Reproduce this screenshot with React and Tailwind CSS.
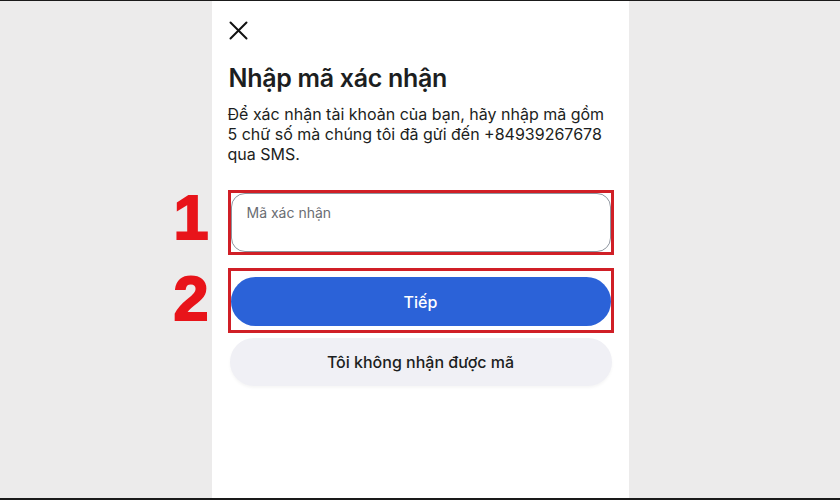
import React from "react";

export default function App() {
  return (
    <div className="w-[840px] h-[500px] bg-[#ecebeb] border-t border-b-2 border-[#1a1a1a] flex justify-center font-['Inter','Roboto',sans-serif] text-[#1c1e21]">
      <div className="w-[417px] h-full bg-white pl-[16px] pr-[15px] pt-[20px] flex flex-col">
        <div className="ml-[1px] w-[19px] h-[19px]">
          <svg width="19" height="19" viewBox="0 0 19 19" fill="none" stroke="#111" strokeWidth="2" strokeLinecap="round">
            <path d="M1.5 1.5 L17.5 17.5 M17.5 1.5 L1.5 17.5" />
          </svg>
        </div>
        <h1 className="mt-[23px] ml-[1px] text-[25px] leading-[30px] font-semibold tracking-[-0.3px]">Nhập mã xác nhận</h1>
        <p className="mt-[11px] text-[16px] leading-[20px]">
          Để xác nhận tài khoản của bạn, hãy nhập mã gồm 5 chữ số mà chúng tôi đã gửi đến +84939267678 qua SMS.
        </p>
        <div className="relative mt-[26px] border-[3px] border-[#d01f26]">
          <span className="absolute right-[100%] mr-[22px] top-[-1px] text-[63px] leading-[50px] font-bold text-[#e8141a] font-['Liberation_Sans',sans-serif] [-webkit-text-stroke:2px_#e8141a]">1</span>
          <div className="h-[59px] rounded-[14px] border border-[#8d949e] bg-white px-[15px] pt-[10px] text-[14px] leading-[18px] text-[#6a6d72]">
            Mã xác nhận
          </div>
        </div>
        <div className="relative mt-[13px] border-[3px] border-[#d01f26] pt-[6px] pb-[4px]">
          <span className="absolute right-[100%] mr-[22px] top-[2px] text-[63px] leading-[50px] font-bold text-[#e8141a] font-['Liberation_Sans',sans-serif] [-webkit-text-stroke:2px_#e8141a]">2</span>
          <div className="h-[49px] rounded-full bg-[#2b62d8] flex items-center justify-center text-white text-[16px] font-medium">
            Tiếp
          </div>
        </div>
        <div className="mt-[5px] mx-[2px] h-[48px] rounded-full bg-[#f0f0f5] shadow-[0_2px_3px_rgba(0,0,0,0.04)] flex items-center justify-center text-[16px] font-medium text-[#1c1e21]">
          Tôi không nhận được mã
        </div>
      </div>
    </div>
  );
}
